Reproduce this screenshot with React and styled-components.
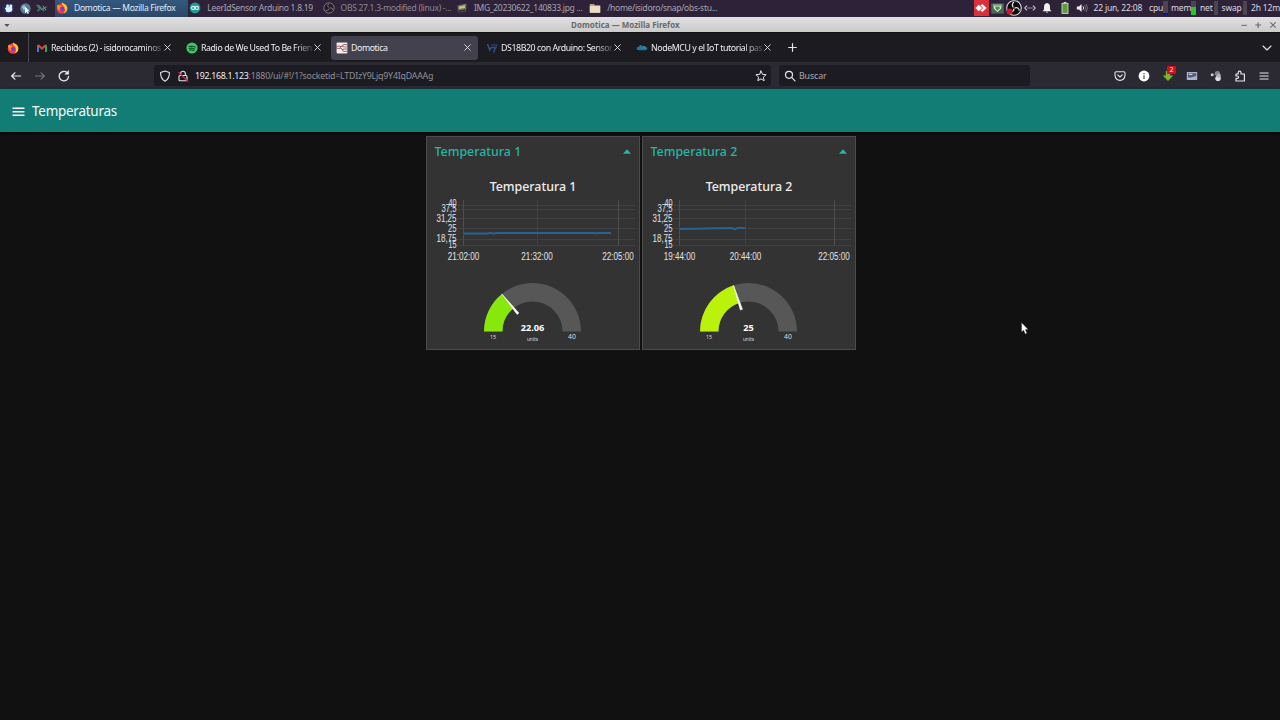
import React from 'react';
import styled, { createGlobalStyle } from 'styled-components';

const tasks = [
  { icon: 'firefox', text: 'Domotica — Mozilla Firefox', active: true },
  { icon: 'arduino', text: 'LeerIdSensor Arduino 1.8.19' },
  { icon: 'obs', text: 'OBS 27.1.3-modified (linux) -...', dim: true },
  { icon: 'image', text: 'IMG_20230622_140833.jpg ...' },
  { icon: 'folder', text: '/home/isidoro/snap/obs-stu...' },
];

const tabs = [
  { icon: 'gmail', text: 'Recibidos (2) - isidorocaminos' },
  { icon: 'spotify', text: 'Radio de We Used To Be Frien' },
  { icon: 'nodered', text: 'Domotica', active: true },
  { icon: 'chip', text: 'DS18B20 con Arduino: Sensor' },
  { icon: 'cloud', text: 'NodeMCU y el IoT tutorial pas' },
];

const groups = [
  {
    title: 'Temperatura 1',
    times: [
      { x: 37.5, text: '21:02:00' },
      { x: 111, text: '21:32:00' },
      { x: 192, text: '22:05:00' },
    ],
    line: 'M38 37.6 H61 L64 36.8 L67 37.4 L71 36.9 H167 L170 37.3 L173 36.9 H185',
    value: 22.06,
    color: '#87e80c',
  },
  {
    title: 'Temperatura 2',
    times: [
      { x: 37.5, text: '19:44:00' },
      { x: 103.5, text: '20:44:00' },
      { x: 192, text: '22:05:00' },
    ],
    line: 'M38 32.9 L90 32.1 L92.5 33.3 L96 31.9 H103.5',
    value: 25,
    color: '#bbf20c',
  },
];

const yTicks = [
  { y: 8, text: '40', w: 8 },
  { y: 13, text: '37,5', w: 15 },
  { y: 22.4, text: '31,25', w: 20 },
  { y: 32.4, text: '25', w: 8.5 },
  { y: 43, text: '18,75', w: 20 },
  { y: 48.6, text: '15', w: 8 },
];

const MIN = 15;
const MAX = 40;

const Svg = ({ name, size = 12 }) => (
  <IconSvg width={size} height={size} viewBox="0 0 12 12">{icons[name]}</IconSvg>
);

const Chart = ({ times, line }) => (
  <ChartSvg viewBox="0 0 214 72">
    {[9.5, 13.5, 22.5, 32.5, 43.5, 49.5].map(y => (
      <path key={y} d={`M31 ${y} H209`} stroke="#414141" strokeWidth="1" />
    ))}
    {times.map((t, i) => (
      <path key={t.x} d={`M${Math.floor(t.x) + 0.5} 4 V50`} stroke={i === 1 ? '#414141' : '#4e4e4e'} strokeWidth="1" />
    ))}
    {yTicks.map(t => (
      <AxisText key={t.text} x="30.5" y={t.y + 3.3} textAnchor="end" textLength={t.w} lengthAdjust="spacingAndGlyphs">{t.text}</AxisText>
    ))}
    {times.map(t => (
      <AxisText key={t.text} x={t.x} y="64.3" textAnchor="middle" textLength="31.5" lengthAdjust="spacingAndGlyphs">{t.text}</AxisText>
    ))}
    <path d={line} fill="none" stroke="#286295" strokeWidth="2" />
  </ChartSvg>
);

const Gauge = ({ value, color }) => {
  const a = ((value - MIN) / (MAX - MIN)) * Math.PI;
  const at = (r, t = 0) => `${106.5 - r * Math.cos(a + t)} ${55.5 - r * Math.sin(a + t)}`;
  return (
    <GaugeSvg viewBox="0 0 214 70">
      <path d="M58 55.5 A48.5 48.5 0 0 1 155 55.5 H136.5 A30 30 0 0 0 76.5 55.5Z" fill="#575757" />
      <path d={`M58 55.5 A48.5 48.5 0 0 1 ${at(48.5)} L${at(30)} A30 30 0 0 0 76.5 55.5Z`} fill={color} />
      <path d={`M${at(48.5)} L${at(23, -0.05)} L${at(23, 0.05)}Z`} fill="#fff" stroke="#fff" strokeWidth="0.5" />
      <GaugeText x="106.5" y="54.5" $size={9.2} $bold>{value}</GaugeText>
      <GaugeText x="106.5" y="65" $size={4.8}>units</GaugeText>
      <GaugeText x="67" y="63.2" $size={5.4}>{MIN}</GaugeText>
      <GaugeText x="146" y="63" $size={6.8}>{MAX}</GaugeText>
    </GaugeSvg>
  );
};

const App = () => {
  return (
    <>
      <GlobalStyle />
      <Screen>
        <Panel>
          <Launchers>
            <Svg name="mouse" size={11} />
            <Svg name="globe" size={11} />
            <Svg name="lizard" size={11} />
          </Launchers>
          {tasks.map(t => (
            <Task key={t.text} $active={t.active} $dim={t.dim}>
              <Svg name={t.icon} />
              <span>{t.text}</span>
            </Task>
          ))}
          <Tray>
            <TrayIcon $w={15}><Svg name="anydesk" size={16} /></TrayIcon>
            <TrayIcon $w={17}><Svg name="download" size={13} /></TrayIcon>
            <TrayIcon $w={17}><Svg name="obsTray" size={16} /></TrayIcon>
            <TrayIcon $w={15}><Svg name="network" /></TrayIcon>
            <TrayIcon $w={18}><Svg name="bell" /></TrayIcon>
            <TrayIcon $w={18}><Svg name="battery" /></TrayIcon>
            <TrayIcon $w={17}><Svg name="volume" /></TrayIcon>
            <TrayText $w={58.5} $left={3}>22 jun, 22:08</TrayText>
            <TrayText $w={14}>cpu</TrayText>
            <Meter $gap={3.5} $fill="#10109a" $level={2} />
            <TrayText $w={20}>mem</TrayText>
            <Meter $gap={4.5} $fill="#24c832" $level={8} />
            <TrayText $w={13.5}>net</TrayText>
            <Meter $gap={3.5} />
            <TrayText $w={21}>swap</TrayText>
            <Meter $gap={4} />
            <TrayText $w={29}>2h 12m</TrayText>
          </Tray>
        </Panel>

        <TitleBar>
          <Svg name="caret" size={8} />
          <Title>Domotica — Mozilla Firefox</Title>
          <WindowButtons>
            <Svg name="min" size={8} />
            <Svg name="max" size={8} />
            <Svg name="close" size={8} />
          </WindowButtons>
        </TitleBar>

        <TabBar>
          <Pinned><Svg name="firefox" /></Pinned>
          <Tabs>
            {tabs.map(t => (
              <Tab key={t.text} $active={t.active}>
                <Svg name={t.icon} />
                <TabText $fade={!t.active}>{t.text}</TabText>
                <Svg name="x" size={9} />
              </Tab>
            ))}
          </Tabs>
          <Svg name="plus" size={11} />
          <TabsMenu><Svg name="chevron" /></TabsMenu>
        </TabBar>

        <NavBar>
          <NavButtons>
            <Svg name="back" />
            <Svg name="forward" />
            <Svg name="reload" />
          </NavButtons>
          <UrlBar>
            <Svg name="shield" />
            <Svg name="lock" />
            <Url><b>192.168.1.123</b>:1880/ui/#!/1?socketid=LTDIzY9Ljq9Y4IqDAAAg</Url>
            <Svg name="star" />
          </UrlBar>
          <SearchBar>
            <Svg name="search" />
            <span>Buscar</span>
          </SearchBar>
          <Extensions>
            <Svg name="pocket" />
            <Svg name="info" />
            <BadgeHolder>
              <Svg name="greenArrow" />
              <Badge>2</Badge>
            </BadgeHolder>
            <Svg name="card" />
            <Svg name="balls" />
            <Svg name="puzzle" />
            <Svg name="menu" />
          </Extensions>
        </NavBar>

        <DashHeader>
          <Svg name="burger" size={13} />
          <DashTitle>Temperaturas</DashTitle>
        </DashHeader>
        <DashBody>
          {groups.map(g => (
            <Group key={g.title}>
              <GroupHeader>
                <span>{g.title}</span>
                <svg width="8" height="5" viewBox="0 0 8 5"><path d="M0 4.8 L4 0.3 L8 4.8Z" fill="#27b5a5" /></svg>
              </GroupHeader>
              <ChartTitle>{g.title}</ChartTitle>
              <Chart times={g.times} line={g.line} />
              <Gauge value={g.value} color={g.color} />
            </Group>
          ))}
        </DashBody>
        <Pointer width="8" height="13" viewBox="0 0 8 13">
          <path d="M0.5 0.5 V10 L2.6 8.2 L4.2 12 L6 11.2 L4.4 7.6 H7.2Z" fill="#fff" stroke="#222" strokeWidth="0.4" />
        </Pointer>
      </Screen>
    </>
  );
};

export default App;

const line = { fill: 'none', stroke: '#e4e4ea', strokeWidth: 1.1, strokeLinecap: 'round', strokeLinejoin: 'round' };

const icons = {
  mouse: (
    <g>
      <circle cx="6" cy="6" r="6" fill="#1b3277" />
      <g fill="#e8f2ff">
        <path d="M2 6 Q3.5 3.8 6 4.6 Q7.4 3 10 4.8 Q10.8 7 9.2 9.2 Q6 10.8 3.2 9.2 Q3.8 7.6 2 6Z" />
        <circle cx="5" cy="3.2" r="1.6" />
        <circle cx="8.6" cy="3.2" r="1.6" />
      </g>
    </g>
  ),
  globe: (
    <g>
      <circle cx="6" cy="6" r="5.6" fill="#557d9c" />
      <path d="M2 4 Q5 1 6 4 T4 8Z" fill="#9cc4cf" />
      <path d="M5.5 4 V11 L7.3 9.5 L8.5 12 L9.6 11.4 L8.5 9 H10.5Z" fill="#fff" />
    </g>
  ),
  lizard: (
    <g fill="none" stroke="#3f806f" strokeWidth="1.6">
      <path d="M0.5 3 Q3 2 5 5 T11.5 4" />
      <path d="M1.5 9 L5 5.5 L9 8.5" />
      <path d="M2 4 Q5 7 8 6.5" strokeWidth="2" />
      <path d="M7.5 3 L11 8" stroke="#78a69b" strokeWidth="1" />
    </g>
  ),
  firefox: (
    <g>
      <circle cx="6" cy="6.5" r="5.3" fill="#f4374e" />
      <path d="M6 0.4 Q10 2 11.3 5.5 Q11.6 10 7.8 11.4 Q11 7 6 2.5Z" fill="#ffc534" />
      <path d="M1 4 L2 2.4 L3.4 3.6 Q5.5 3.4 6 4.6 Q3 6 5 9 Q1 8 1 4Z" fill="#ff9026" />
      <circle cx="6" cy="6.9" r="2.1" fill="#7a3cc4" />
    </g>
  ),
  arduino: (
    <g>
      <circle cx="6" cy="6" r="5.4" fill="#1f9a98" />
      <g fill="none" stroke="#d8f3f0" strokeWidth="1.1">
        <circle cx="4.1" cy="6" r="1.6" />
        <circle cx="7.9" cy="6" r="1.6" />
      </g>
    </g>
  ),
  obs: (
    <g fill="none" stroke="#77727c" strokeWidth="1">
      <circle cx="6" cy="6" r="5.2" fill="#231e2a" />
      <path d="M6 1.5 Q3.5 3 5.5 5.5 M10 8 Q9.5 5 6.5 6 M2.5 8.5 Q5.5 9.5 6 6.5" />
    </g>
  ),
  obsTray: (
    <g>
      <circle cx="6" cy="6" r="5.5" fill="#0c0a0d" stroke="#d8d8d8" strokeWidth="0.8" />
      <path d="M6 1.5 Q3.8 3 5.5 5.5 M10 8 Q9.5 5 6.5 6 M3 8.5 Q5.5 9.5 6 6.5" fill="none" stroke="#ddd" strokeWidth="1" />
      <circle cx="2.7" cy="8.6" r="2.3" fill="#d9122d" />
    </g>
  ),
  image: (
    <g>
      <path d="M1.5 3.5 L10.5 1.5 L10 9.5 L2 10.5Z" fill="#6d6d68" />
      <path d="M3 4.5 L9 3.2 V6 L3 7Z" fill="#c9c27f" />
      <path d="M2 8.5 L9.5 7.5 V9 L2.2 10Z" fill="#2a2a2a" />
    </g>
  ),
  folder: (
    <g>
      <path d="M0.8 2 H5 L6 3.2 H11.2 V10.5 H0.8Z" fill="#bfa47a" />
      <rect x="0.8" y="4" width="10.4" height="6.8" fill="#eadfc2" />
    </g>
  ),
  anydesk: (
    <g>
      <rect width="12" height="12" fill="#dc2f3c" />
      <path d="M1.8 6 L4.3 3.5 L6.8 6 L4.3 8.5Z" fill="#fff" />
      <path d="M5.6 4.2 L7 3 L10.2 6 L7 9 L5.6 7.8 L7.6 6Z" fill="#fff" />
    </g>
  ),
  download: (
    <g>
      <rect x="0.2" y="1.3" width="11.6" height="9.4" fill="#4a6a54" />
      <rect x="1.8" y="2" width="8.4" height="2.4" fill="#8ba28f" />
      <path d="M2.6 4 H9.4 V6 L6 9.2 L2.6 6Z" fill="#dff2d8" />
      <path d="M4 4.4 H8 V6 L6 8 L4 6Z" fill="#3d8f4c" />
    </g>
  ),
  network: (
    <g fill="none" stroke="#d0cdd2" strokeWidth="1.1">
      <path d="M3 3.6 L0.8 6 L3 8.4 M9 3.6 L11.2 6 L9 8.4" />
      <path d="M3.4 6 H4.6 M5.4 6 H6.6 M7.4 6 H8.6" />
    </g>
  ),
  bell: <path d="M6 1 Q9 1.5 9 5 V7.5 L10.5 9.2 H1.5 L3 7.5 V5 Q3 1.5 6 1Z M4.8 9.8 H7.2 Q6 11.6 4.8 9.8Z" fill="#f0f0f0" />,
  battery: (
    <g>
      <rect x="4.6" y="0" width="2.8" height="1.4" fill="#ddd" />
      <rect x="3" y="1.4" width="6" height="10" fill="#5c9c3c" stroke="#cfd9c8" strokeWidth="0.9" />
    </g>
  ),
  volume: (
    <g>
      <path d="M0.8 4.4 H3 L5.6 2 V10 L3 7.6 H0.8Z" fill="#eee" />
      <path d="M7 4.3 Q8.2 6 7 7.7" fill="none" stroke="#ddd" />
      <path d="M8.6 3 Q10.8 6 8.6 9 M10.2 2 Q13 6 10.2 10" fill="none" stroke="#77727c" strokeWidth="0.9" />
    </g>
  ),
  caret: <path d="M2 4.5 H10 L6 9Z" fill="#555" />,
  min: <path d="M2 6.5 H10.5" stroke="#6a6a6a" strokeWidth="1.5" />,
  max: <path d="M2 6 H10.5 M6.2 2 V10.5" stroke="#6a6a6a" strokeWidth="1.6" />,
  close: <path d="M2 2 L10 10 M10 2 L2 10" stroke="#6a6a6a" strokeWidth="1.6" />,
  gmail: (
    <g fill="none" strokeWidth="2">
      <path d="M2 10 V3" stroke="#3d7de0" />
      <path d="M10 10 V3" stroke="#35a452" />
      <path d="M2 3 L6 6.6 L10 3" stroke="#e04336" />
    </g>
  ),
  spotify: (
    <g>
      <circle cx="6" cy="6" r="5.6" fill="#3bc865" />
      <path d="M3 4.4 Q6.5 3.4 9.2 5 M3.2 6.3 Q6.2 5.4 8.6 6.9 M3.5 8 Q6 7.4 8 8.5" fill="none" stroke="#123b1f" strokeWidth="1" strokeLinecap="round" />
    </g>
  ),
  nodered: (
    <g>
      <rect x="0.6" y="0.6" width="10.8" height="10.8" rx="0.8" fill="#f3eded" />
      <path d="M0.6 5.2 H4 Q6 3.5 8 3.8 M4 5.4 Q6 8.3 9 8.2" fill="none" stroke="#8e3434" strokeWidth="0.9" />
      <rect x="7" y="2.5" width="4.4" height="2.4" rx="0.6" fill="#f3eded" stroke="#7a3a3a" strokeWidth="0.7" />
      <rect x="7" y="7" width="4.4" height="2.4" rx="0.6" fill="#f3eded" stroke="#7a3a3a" strokeWidth="0.7" />
      <rect x="0.6" y="4.2" width="4" height="2.2" rx="0.6" fill="#f3eded" stroke="#7a3a3a" strokeWidth="0.7" />
    </g>
  ),
  chip: (
    <g fill="none" stroke="#34508f" strokeWidth="1.5">
      <path d="M1.5 2 L3.8 8 L5.5 5.4 H9.5 L7.5 10.5" />
      <path d="M5 3 H10.8 L9.8 6" stroke="#263b6e" />
    </g>
  ),
  cloud: (
    <g fill="#207898">
      <ellipse cx="6" cy="6.4" rx="5.4" ry="1.9" />
      <circle cx="4.8" cy="5" r="1.9" />
      <circle cx="7.8" cy="5.4" r="1.6" fill="#2488a8" />
    </g>
  ),
  x: <path d="M2.3 2.3 L9.7 9.7 M9.7 2.3 L2.3 9.7" {...line} strokeWidth="1.2" />,
  plus: <path d="M6 1.8 V10.2 M1.8 6 H10.2" {...line} strokeWidth="1.3" />,
  chevron: <path d="M2 4 L6 8 L10 4" {...line} />,
  back: <path d="M10.6 6 H1.6 M5 2.8 L1.6 6 L5 9.2" {...line} strokeWidth="1.2" />,
  forward: <path d="M1.4 6 H10.4 M7 2.8 L10.4 6 L7 9.2" {...line} stroke="#73727a" />,
  reload: (
    <g {...line} strokeWidth="1.3">
      <path d="M10.6 6.3 A4.7 4.7 0 1 1 9 2.6" />
      <path d="M10.6 0.8 V4.2 H7.2Z" fill="#f0f0f4" strokeWidth="0.6" />
    </g>
  ),
  shield: <path d="M6 1 L10.4 2.5 Q10.8 8.5 6 11.2 Q1.2 8.5 1.6 2.5Z" {...line} />,
  lock: (
    <g {...line}>
      <path d="M3.6 5.4 V3.6 Q3.8 1.2 6 1.2 Q8.2 1.2 8.4 3.6 V5.4" />
      <rect x="2" y="5.5" width="8" height="5.2" rx="1" />
      <path d="M1.6 2.4 L10.6 11" stroke="#d02850" strokeWidth="1.3" />
    </g>
  ),
  star: <path d="M6 1 L7.5 4.3 L11.1 4.7 L8.4 7.1 L9.2 10.7 L6 8.9 L2.8 10.7 L3.6 7.1 L0.9 4.7 L4.5 4.3Z" {...line} strokeWidth="1" />,
  search: (
    <g {...line} strokeWidth="1.2">
      <circle cx="5" cy="4.8" r="3.5" />
      <path d="M7.6 7.4 L11 10.8" />
    </g>
  ),
  pocket: (
    <g {...line} strokeWidth="1.1">
      <path d="M2.2 1.8 H9.8 Q11 1.8 11 3 V5.4 Q10.4 10.3 6 10.4 Q1.6 10.3 1 5.4 V3 Q1 1.8 2.2 1.8Z" />
      <path d="M3.7 4.8 L6 7 L8.3 4.8" />
    </g>
  ),
  info: (
    <g>
      <circle cx="6" cy="6" r="5.4" fill="#fff" />
      <path d="M6 3 V4.2 M6 5.2 V9" stroke="#777" strokeWidth="1.6" />
    </g>
  ),
  greenArrow: <path d="M3.8 1 H8.2 V5.4 H11.3 L6 11 L0.7 5.4 H3.8Z" fill="#7cb42e" />,
  card: (
    <g>
      <rect x="0.8" y="2" width="10.4" height="8" rx="0.6" fill="#a9b4c6" />
      <path d="M2 3.2 H10.2 V6 L5 7.6 H2Z" fill="#4c5d7c" />
      <path d="M2.8 4.4 H6.4" stroke="#dbe3ef" />
    </g>
  ),
  balls: (
    <g>
      <circle cx="2.2" cy="4.8" r="1.5" fill="#c9c9cf" />
      <ellipse cx="7.4" cy="3.9" rx="2.8" ry="3" fill="#84868e" />
      <circle cx="8" cy="8.2" r="2.8" fill="#dcdce2" />
      <circle cx="8.8" cy="5.8" r="2" fill="#b4b5bc" />
      <circle cx="5.2" cy="6.3" r="1.1" fill="#34343c" />
    </g>
  ),
  puzzle: <path d="M4.2 4 V2.6 A1.4 1.4 0 0 1 7 2.6 V4 H10.4 V11 H2 V8.4 H3.4 A1.2 1.2 0 0 0 3.4 6 H2 V4Z" {...line} strokeWidth="1.2" />,
  menu: <path d="M2 3 H10.2 M2 6 H10.2 M2 9 H10.2" {...line} />,
  burger: <path d="M0.5 3 H11.5 M0.5 6.2 H11.5 M0.5 9.4 H11.5" stroke="#fff" strokeWidth="1.3" />,
};

const GlobalStyle = createGlobalStyle`
  * { box-sizing: border-box; }
  body {
    margin: 0;
    background-color: #111;
    overflow: hidden;
    font-family: "Noto Sans", sans-serif;
  }
`;

const Flex = styled.div`
  display: flex;
  align-items: center;
`;

const Screen = styled.div`
  position: relative;
  width: 1280px;
  height: 720px;
  overflow: hidden;
  background-color: #111;
`;

const IconSvg = styled.svg`
  display: block;
  flex: none;
`;

const Panel = styled(Flex)`
  height: 17px;
  background-color: #2d2238;
  font-size: 8.5px;
  white-space: nowrap;
  color: #c5bfc9;
`;

const Launchers = styled(Flex)`
  width: 55px;
  padding: 0 0 1px 3px;
  gap: 5.5px;
`;

const Task = styled(Flex)`
  width: 133.3px;
  height: 17px;
  padding: 0 0 2px 1px;
  gap: 6px;
  letter-spacing: -0.29px;
  color: ${p => (p.$active ? '#e4edf5' : p.$dim ? '#8d8794' : '#aaa4b0')};
  background: ${p => (p.$active ? 'linear-gradient(#34587e, #2b4766)' : 'none')};
`;

const Tray = styled(Flex)`
  margin-left: auto;
  height: 17px;
  padding-bottom: 1px;
`;

const TrayIcon = styled(Flex)`
  justify-content: center;
  width: ${p => p.$w}px;
  height: 17px;
  overflow: hidden;
`;

const TrayText = styled.div`
  width: ${p => p.$w}px;
  padding-left: ${p => p.$left || 0}px;
  letter-spacing: -0.17px;
  line-height: 14px;
  margin-bottom: 1px;
  color: #dedbe0;
`;

const Meter = styled.div`
  width: 4.5px;
  height: 14px;
  margin-right: ${p => p.$gap}px;
  background: linear-gradient(to top, ${p => p.$fill || '#4a4550'} ${p => p.$level || 0}px, #4a4550 0);
`;

const TitleBar = styled(Flex)`
  height: 16px;
  padding: 0 3px;
  justify-content: space-between;
  background: linear-gradient(#e0e0e0, #cbcbcb);
  border-bottom: 1px solid #111;
`;

const Title = styled.div`
  font-size: 8px;
  font-weight: bold;
  color: #6a6a6a;
`;

const WindowButtons = styled(Flex)`
  gap: 6.6px;
`;

const TabBar = styled(Flex)`
  height: 29px;
  background-color: #1b1b20;
`;

const Pinned = styled(Flex)`
  width: 29px;
  height: 29px;
  padding-left: 7px;
  border-right: 1px solid #4a4a50;
`;

const Tabs = styled(Flex)`
  gap: 3px;
  margin: 0 9px 0 2px;
`;

const Tab = styled(Flex)`
  width: 147px;
  height: 24px;
  padding: 0 6px 0 5px;
  border-radius: 3px;
  background-color: ${p => (p.$active ? '#42414d' : 'transparent')};
`;

const TabText = styled.div`
  flex: 1;
  margin: 0 1px 0 3px;
  white-space: nowrap;
  font-size: 8.8px;
  letter-spacing: -0.42px;
  color: #f0f0f4;
  mask-image: ${p => (p.$fade ? 'linear-gradient(to left, rgb(0 0 0 / 20%), #000 18px)' : 'none')};
`;

const TabsMenu = styled.div`
  margin-left: auto;
  padding-right: 7px;
`;

const NavBar = styled(Flex)`
  height: 27px;
  padding-top: 1px;
  background-color: #2b2a33;
  border-bottom: 1px solid #1d3c42;
`;

const NavButtons = styled(Flex)`
  width: 154px;
  padding-left: 10px;
  gap: 12px;
`;

const UrlBar = styled(Flex)`
  width: 617px;
  height: 21px;
  padding: 0 4px 0 4.5px;
  border-radius: 3px;
  background-color: #1c1b22;
  > svg + svg { margin-left: 6px; }
`;

const Url = styled.div`
  flex: 1;
  margin-left: 6.5px;
  font-size: 8.8px;
  letter-spacing: -0.2px;
  white-space: nowrap;
  color: #908f98;
  b {
    font-weight: normal;
    letter-spacing: -0.3px;
    color: #f0f0f4;
  }
`;

const SearchBar = styled(UrlBar)`
  width: 251px;
  margin-left: 8px;
  gap: 3.5px;
  font-size: 8.8px;
  letter-spacing: -0.1px;
  color: #a9a8b0;
`;

const Extensions = styled(Flex)`
  margin-left: auto;
  padding-right: 10px;
  gap: 12px;
`;

const BadgeHolder = styled.div`
  position: relative;
`;

const Badge = styled.div`
  position: absolute;
  top: -4px;
  left: 5px;
  width: 9px;
  height: 8px;
  border-radius: 1px;
  text-align: center;
  font-size: 7px;
  line-height: 8px;
  color: #fff;
  background-color: #d80d14;
`;

const DashHeader = styled(Flex)`
  height: 43px;
  padding: 1px 0 0 12px;
  gap: 7px;
  background-color: #117d74;
  box-shadow: 0 1px 3px #000;
`;

const DashTitle = styled.div`
  font-size: 13.5px;
  letter-spacing: -0.27px;
  color: #f4fbfa;
`;

const DashBody = styled.div`
  display: flex;
  gap: 2px;
  padding: 4px 0 0 426px;
`;

const Group = styled.div`
  width: 214px;
  height: 214px;
  border: 1px solid #4c4c4c;
  background-color: #333;
`;

const GroupHeader = styled(Flex)`
  justify-content: space-between;
  height: 29px;
  padding: 0 8px 0 7.5px;
  font-size: 12.4px;
  font-weight: 500;
  color: #27b5a5;
`;

const ChartTitle = styled.div`
  height: 30px;
  padding-top: 13px;
  line-height: 16px;
  text-align: center;
  font-size: 12.4px;
  font-weight: 500;
  color: #eee;
`;

const ChartSvg = styled.svg`
  display: block;
  width: 214px;
  height: 72px;
  margin-left: -1px;
`;

const AxisText = styled.text`
  font-family: "Liberation Sans", Arial, sans-serif;
  font-size: 10px;
  fill: #e4e4e4;
`;

const GaugeSvg = styled.svg`
  display: block;
  width: 214px;
  height: 70px;
  margin: 8px 0 0 -1px;
`;

const GaugeText = styled.text`
  font-size: ${p => p.$size}px;
  font-weight: ${p => (p.$bold ? 'bold' : 'normal')};
  text-anchor: middle;
  fill: ${p => (p.$bold ? '#fff' : '#ddd')};
`;

const Pointer = styled.svg`
  position: absolute;
  left: 1021px;
  top: 322px;
`;
